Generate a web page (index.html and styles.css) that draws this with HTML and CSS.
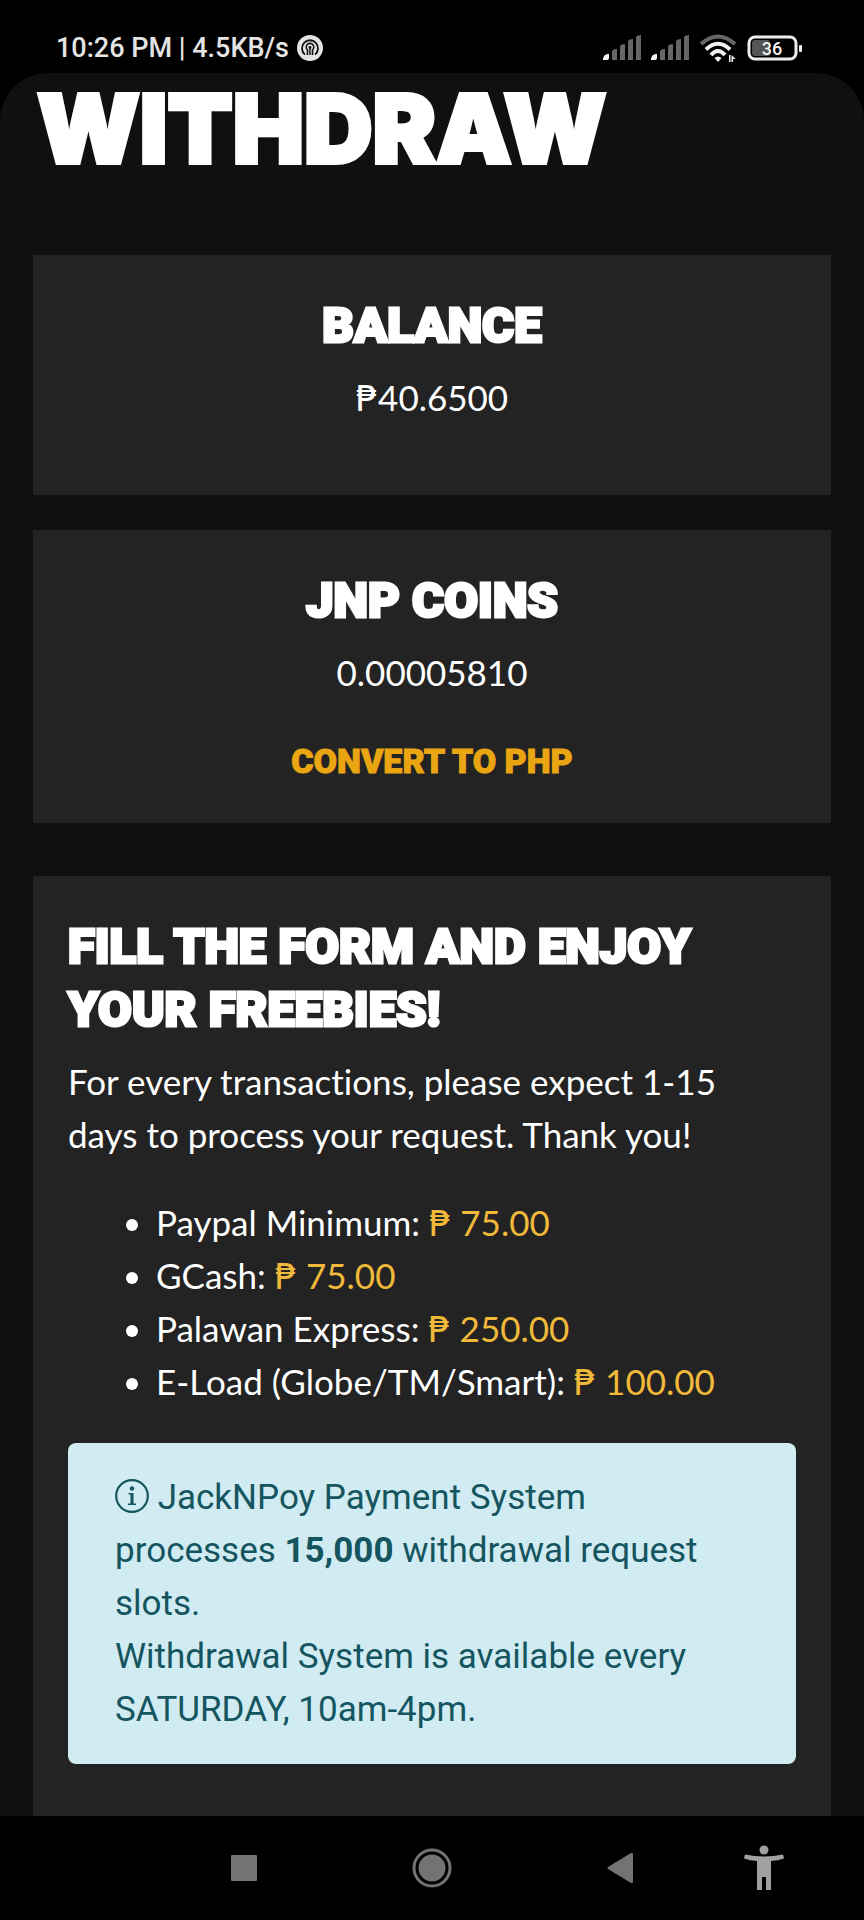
FILE: index.html
```html
<!DOCTYPE html>
<html lang="en">
<head>
  <meta charset="UTF-8">
  <title>Withdraw</title>
  <meta name="viewport" content="width=device-width, initial-scale=1">
  <link rel="stylesheet" href="styles.css">
</head>
<body>

  <!-- STATUS BAR -->
  <header class="status">
    <div class="status__left">
      <span>10:26 PM | 4.5KB/s</span>
      <svg width="26" height="26" viewBox="0 0 26 26" aria-hidden="true">
        <circle cx="13" cy="13" r="13" fill="#e4e4e4"/>
        <path d="M8 19.500A8 8 0 1 1 18 19.500" fill="none" stroke="#111" stroke-width="1.800"/>
        <path d="M10.500 20v-5A3.800 3.800 0 1 1 15.500 15v5" fill="none" stroke="#111" stroke-width="1.600"/>
        <circle cx="13" cy="12.500" r="1.400" fill="#111"/>
        <path d="M12.300 13h1.400v7h-1.400z" fill="#111"/>
      </svg>
    </div>
    <div class="status__right">
      <svg width="38" height="26" viewBox="0 0 38 26" aria-hidden="true">
        <path d="M0 25c0-4 2-6 6-6v4c0 1-1 2-2 2z" fill="#f2f2f2"/>
        <path d="M9 16q1-2 5-2v11H9zM17 11q1-2 5-2v16h-5zM25 6q1-2 5-2v21h-5zM33 2q1-2 5-2v25h-5z" fill="#666"/>
      </svg>
      <svg width="38" height="26" viewBox="0 0 38 26" aria-hidden="true">
        <path d="M0 25c0-4 2-6 6-6v4c0 1-1 2-2 2z" fill="#f2f2f2"/>
        <path d="M9 16q1-2 5-2v11H9zM17 11q1-2 5-2v16h-5zM25 6q1-2 5-2v21h-5zM33 2q1-2 5-2v25h-5z" fill="#666"/>
      </svg>
      <svg width="38" height="30" viewBox="0 0 38 30" aria-hidden="true">
        <g fill="none" stroke-width="4">
          <path d="M2 11Q19-4 36 11" stroke="#666"/>
          <path d="M7 16.500Q19 5 31 16.500" stroke="#f2f2f2"/>
          <path d="M12 22Q19 14 26 22" stroke="#f2f2f2"/>
        </g>
        <path d="M15.500 25q3.500-3 7 0L19 29z" fill="#f2f2f2"/>
        <path d="M26 25l4 4v-7h1.500v7H30zM32.500 29v-7l4 4h-2.500v3z" fill="#f2f2f2"/>
      </svg>
      <svg class="status__battery" width="56" height="26" viewBox="0 0 56 26" role="img" aria-label="Battery 36%">
        <rect x="5" y="5" width="18" height="16" rx="3" fill="#555"/>
        <rect x="2" y="2" width="47" height="22" rx="6" fill="none" stroke="#eee" stroke-width="3"/>
        <rect x="52" y="10" width="3" height="7" rx="1" fill="#eee"/>
        <text x="25" y="20" text-anchor="middle" fill="#f2f2f2">36</text>
      </svg>
    </div>
  </header>

  <!-- PAGE -->
  <main class="app">
    <h1 class="title">WITHDRAW</h1>

    <section class="card card--center">
      <h2 class="heading">BALANCE</h2>
      <p class="amount"><span class="peso">₱</span>40.6500</p>
    </section>

    <section class="card card--center">
      <h2 class="heading">JNP COINS</h2>
      <p class="amount">0.00005810</p>
      <button class="convert" type="button">CONVERT TO PHP</button>
    </section>

    <section class="card card--form">
      <h2 class="heading">FILL THE FORM AND ENJOY YOUR FREEBIES!</h2>
      <p class="intro">For every transactions, please expect 1-15 days to process your request. Thank you!</p>
      <ul class="limits">
        <li>Paypal Minimum: <span class="limits__value"><span class="peso">₱</span> 75.00</span></li>
        <li>GCash: <span class="limits__value"><span class="peso">₱</span> 75.00</span></li>
        <li>Palawan Express: <span class="limits__value"><span class="peso">₱</span> 250.00</span></li>
        <li>E-Load (Globe/TM/Smart): <span class="limits__value"><span class="peso">₱</span> 100.00</span></li>
      </ul>
      <div class="alert" role="alert">
        <svg class="alert__icon" width="34" height="34" viewBox="0 0 34 34" aria-hidden="true">
          <circle cx="17" cy="17" r="15.800" fill="none" stroke="currentColor" stroke-width="2.200"/>
          <circle cx="17" cy="9.500" r="2.200" fill="currentColor"/>
          <path d="M13.500 14h5v10.500h2.500v1.500h-8v-1.500h2.500v-9h-2z" fill="currentColor"/>
        </svg>
        JackNPoy Payment System processes <b>15,000</b> withdrawal request slots.<br>
        Withdrawal System is available every SATURDAY, 10am-4pm.
      </div>
    </section>
  </main>

  <!-- NAVIGATION -->
  <nav class="nav">
    <div class="nav__main">
      <button class="nav__btn" type="button" aria-label="Recent apps">
        <svg width="26" height="26" viewBox="0 0 26 26"><rect width="26" height="26" rx="1" fill="#737373"/></svg>
      </button>
      <button class="nav__btn" type="button" aria-label="Home">
        <svg width="40" height="40" viewBox="0 0 40 40">
          <circle cx="20" cy="20" r="18" fill="none" stroke="#737373" stroke-width="3"/>
          <circle cx="20" cy="20" r="13.500" fill="#737373"/>
        </svg>
      </button>
      <button class="nav__btn" type="button" aria-label="Back">
        <svg width="26" height="30" viewBox="0 0 26 30"><path d="M1 14 24 0q2-1 2 1v28q0 2-2 1L1 16q-1-1 0-2z" fill="#737373"/></svg>
      </button>
    </div>
    <button class="nav__btn nav__btn--end" type="button" aria-label="Accessibility">
      <svg width="40" height="46" viewBox="0 0 40 46">
        <circle cx="20" cy="5" r="4.500" fill="#a0a0a0"/>
        <path d="M1 9.500q19 4 38 0l1 4q-6 2-13 2.500v29h-5v-13h-4v13h-5v-29q-7-.5-13-2.500z" fill="#a0a0a0"/>
      </svg>
    </button>
  </nav>

</body>
</html>
```
FILE: styles.css
```css
* {
  box-sizing: border-box;
}

body {
  margin: 0;
  min-height: 100vh;
  display: flex;
  flex-direction: column;
  background: #000;
  color: #fff;
  font-family: Lato, Roboto, sans-serif;
  font-size: 35px;
  line-height: 53px;
  font-variant-ligatures: none;
}

h1, h2, p, ul {
  margin: 0;
}

button {
  padding: 0;
  border: 0;
  background: none;
  cursor: pointer;
}

/* === STATUS BAR === */
.status {
  display: flex;
  justify-content: space-between;
  align-items: center;
  height: 73px;
  padding: 22px 61px 0 56px;
  font-family: Roboto, sans-serif;
  font-size: 27px;
  font-weight: 500;
  line-height: 32px;
  color: #e4e4e4;
}

.status__left,
.status__right {
  display: flex;
  align-items: center;
  gap: 8px;
}

.status__right {
  gap: 10px;
}

.status__battery {
  font-size: 18px;
}

/* === PAGE === */
.app {
  flex: 1;
  display: flex;
  flex-direction: column;
  padding: 0 33px;
  border-radius: 48px 48px 0 0;
  background: #101010;
}

.title,
.heading,
.convert {
  font-family: Roboto, sans-serif;
  font-weight: 900;
}

.title {
  padding: 6px 4px 76px;
  font-family: Inter, Roboto, sans-serif;
  font-size: 95px;
  line-height: 100px;
  -webkit-text-stroke: 4px #fff;
}

.card {
  margin-bottom: 35px;
  padding: 39px 35px 35px;
  background: #232323;
}

.card--center {
  display: flex;
  flex-direction: column;
  align-items: center;
}

.card--form {
  flex: 1;
  margin: 18px 0 0;
}

.heading {
  margin-bottom: 14px;
  font-size: 49px;
  line-height: 63px;
  -webkit-text-stroke: 3px #fff;
}

.amount {
  margin-bottom: 36px;
}

.intro {
  margin-bottom: 35px;
  padding-right: 35px;
}

.convert {
  font-size: 34px;
  line-height: 53px;
  color: #eaa512;
  -webkit-text-stroke: 1px #eaa512;
}

.limits {
  margin-bottom: 35px;
  padding-left: 88px;
}

.limits__value {
  color: #f0b93a;
}

.peso {
  font-family: "DejaVu Sans", sans-serif;
  line-height: 1;
}

/* === ALERT === */
.alert {
  padding: 28px 47px;
  border-radius: 8px;
  background: #d1ebf2;
  color: #14555f;
  font-family: Roboto, sans-serif;
}

.alert__icon {
  vertical-align: -4px;
}

/* === NAVIGATION === */
.nav {
  display: grid;
  grid-template-columns: 1fr auto 1fr;
  height: 104px;
}

.nav__main {
  grid-column: 2;
  display: flex;
  gap: 128px;
}

.nav__btn {
  display: flex;
  justify-content: center;
  align-items: center;
  width: 60px;
}

.nav__btn--end {
  justify-self: end;
  margin-right: 70px;
}
```
